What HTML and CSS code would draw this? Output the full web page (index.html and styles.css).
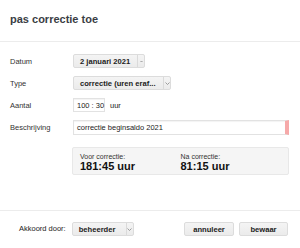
FILE: index.html
```html
<!DOCTYPE html>
<html>
<head>
<meta charset="utf-8">
<link rel="stylesheet" href="styles.css">
</head>
<body>
<div class="dialog">
  <header class="head">
    <h1 class="title">pas correctie toe</h1>
  </header>
  <div class="form">
    <div class="row">
      <span class="label">Datum</span>
      <div class="btn btn-date">
        <span class="btn-text">2 januari 2021</span>
        <span class="caret caret-dot"><svg width="3" height="3" viewBox="0 0 3 3"><path d="M0.5 1 L1.5 2 L2.5 1" fill="none" stroke="#888" stroke-width="0.8"/></svg></span>
      </div>
    </div>
    <div class="row">
      <span class="label">Type</span>
      <div class="btn btn-type">
        <span class="btn-text">correctie (uren eraf...</span>
        <span class="caret"><svg width="5" height="3" viewBox="0 0 5 3"><path d="M0.5 0.5 L2.5 2.5 L4.5 0.5" fill="none" stroke="#888" stroke-width="0.8"/></svg></span>
      </div>
    </div>
    <div class="row">
      <span class="label">Aantal</span>
      <div class="inputs">
        <div class="field field-time">100 : 30</div>
        <span class="unit">uur</span>
      </div>
    </div>
    <div class="row">
      <span class="label">Beschrijving</span>
      <div class="field field-desc">correctie beginsaldo 2021</div>
    </div>
  </div>
  <div class="summary">
    <div class="sum-col">
      <div class="sum-label">Voor correctie:</div>
      <div class="sum-value">181:45 uur</div>
    </div>
    <div class="sum-col">
      <div class="sum-label">Na correctie:</div>
      <div class="sum-value">81:15 uur</div>
    </div>
  </div>
  <footer class="foot">
    <span class="foot-label">Akkoord door:</span>
    <div class="btn btn-user">
      <span class="btn-text">beheerder</span>
      <span class="caret"><svg width="5" height="3" viewBox="0 0 5 3"><path d="M0.5 0.5 L2.5 2.5 L4.5 0.5" fill="none" stroke="#888" stroke-width="0.8"/></svg></span>
    </div>
    <div class="actions">
      <div class="btn btn-action">annuleer</div>
      <div class="btn btn-action btn-save">bewaar</div>
    </div>
  </footer>
</div>
</body>
</html>
```
FILE: styles.css
```css
html, body {
  margin: 0;
  padding: 0;
  background: #ffffff;
}
body {
  font-family: "Liberation Sans", Arial, sans-serif;
  color: #333;
  font-size: 7.5px;
}
.dialog {
  display: flex;
  flex-direction: column;
  height: 248px;
  width: 300px;
  box-sizing: border-box;
}
.head {
  height: 41px;
  border-bottom: 1px solid #ececec;
  box-sizing: content-box;
}
.title {
  margin: 0;
  padding: 13px 0 0 10px;
  font-size: 11px;
  line-height: 13px;
  font-weight: bold;
  color: #3a3e44;
}
.form {
  display: flex;
  flex-direction: column;
  padding: 8px 11px 0 10px;
}
.row {
  display: grid;
  grid-template-columns: 63px 1fr;
  align-items: center;
  height: 22px;
}
.label {
  color: #333;
  font-size: 7.5px;
}
.btn {
  display: flex;
  align-items: center;
  height: 14px;
  box-sizing: border-box;
  border: 1px solid #dcdcdc;
  border-radius: 2px;
  background: linear-gradient(#f4f4f4, #ebebeb);
  font-weight: bold;
  color: #222;
  font-size: 7.6px;
  white-space: nowrap;
}
.btn-text {
  padding: 0 0 0 6px;
  flex: 1;
  white-space: nowrap;
}
.caret {
  display: flex;
  align-items: center;
  justify-content: center;
  width: 7px;
  height: 100%;
  border-left: 1px solid #dadada;
  box-sizing: border-box;
}
.btn-date {
  width: 72px;
}
.btn-type {
  width: 98px;
}
.inputs {
  display: flex;
  align-items: center;
  gap: 5px;
}
.field {
  height: 14px;
  box-sizing: border-box;
  border: 1px solid #e2e2e2;
  box-shadow: inset 0 1px 1px rgba(0,0,0,0.05);
  background: #fff;
  display: flex;
  align-items: center;
  padding-left: 3px;
  color: #222;
  font-size: 7.5px;
  white-space: nowrap;
}
.field-time {
  width: 32px;
  flex: none;
}
.unit {
  color: #222;
}
.field-desc {
  height: 15px;
  border-right: 4px solid #f6a9a9;
}
.summary {
  display: grid;
  grid-template-columns: 1fr 1fr;
  margin: 9px 11px 0 72px;
  padding: 4px 7px 2px 7px;
  background: #f5f5f5;
  border: 1px solid #e8e8e8;
  border-radius: 2px;
  height: 28px;
  box-sizing: border-box;
}
.sum-label {
  font-size: 7px;
  line-height: 9px;
  color: #333;
}
.sum-value {
  font-size: 11px;
  line-height: 11px;
  font-weight: bold;
  color: #111;
}
.foot {
  margin-top: auto;
  height: 38px;
  box-sizing: border-box;
  border-top: 1px solid #ececec;
  display: flex;
  align-items: flex-start;
  padding: 11px 12px 0 19px;
  gap: 6px;
}
.foot-label {
  line-height: 14px;
  color: #222;
}
.btn-user {
  width: 62px;
}
.actions {
  margin-left: auto;
  display: flex;
  gap: 5px;
}
.btn-action {
  width: 50px;
  justify-content: center;
}
.btn-save {
  width: 49px;
}
```
